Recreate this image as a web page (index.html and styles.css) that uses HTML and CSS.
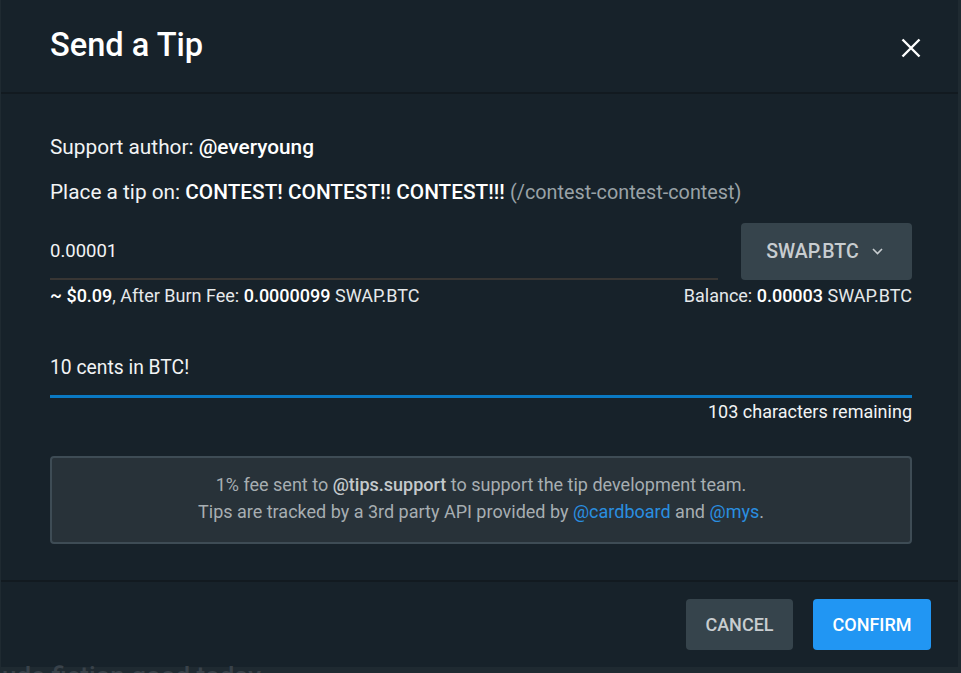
FILE: index.html
```html
<!DOCTYPE html>
<html>
<head>
<meta charset="utf-8">
<link rel="stylesheet" href="styles.css">
</head>
<body>
<div class="page">
  <div class="dialog">
    <div class="header">
      <h1 class="title">Send a Tip</h1>
      <button class="close" aria-label="close">
        <svg width="20" height="20" viewBox="0 0 20 20"><path d="M1.5 1.5 L18.5 18.5 M18.5 1.5 L1.5 18.5" stroke="#ffffff" stroke-width="2.4" fill="none"/></svg>
      </button>
    </div>
    <div class="content">
      <p class="line">Support author: <b>@everyoung</b></p>
      <p class="line line2">Place a tip on: <b>CONTEST! CONTEST!! CONTEST!!!</b> <span class="muted">(/contest-contest-contest)</span></p>
      <div class="amount-row">
        <div class="amount-input">0.00001</div>
        <button class="token">SWAP.BTC
          <svg width="11" height="7" viewBox="0 0 11 7"><path d="M1 1 L5.5 5.5 L10 1" stroke="#c8cdd0" stroke-width="1.6" fill="none"/></svg>
        </button>
      </div>
      <div class="helper-row">
        <span><b>~ $0.09</b>, After Burn Fee: <b>0.0000099</b> SWAP.BTC</span>
        <span>Balance: <b>0.00003</b> SWAP.BTC</span>
      </div>
      <div class="message">10 cents in BTC!</div>
      <div class="remaining">103 characters remaining</div>
      <div class="info">
        <div>1% fee sent to <b>@tips.support</b> to support the tip development team.</div>
        <div>Tips are tracked by a 3rd party API provided by <a>@cardboard</a> and <a>@mys</a>.</div>
      </div>
    </div>
    <div class="footer">
      <button class="btn cancel">CANCEL</button>
      <button class="btn confirm">CONFIRM</button>
    </div>
  </div>
  <div class="behind">ude fiction good today</div>
</div>
</body>
</html>
```

FILE: styles.css
```css
html, body {
  margin: 0;
  padding: 0;
  background: #1f2a31;
  height: 100%;
  overflow: hidden;
}
.page {
  font-family: Roboto, "Liberation Sans", sans-serif;
  color: #f2f4f5;
  height: 673px;
  overflow: hidden;
}
.dialog {
  margin: 0 3px 0 1px;
  height: 667px;
  background: #17222a;
  display: flex;
  flex-direction: column;
}
.header {
  height: 92px;
  border-bottom: 2px solid #121a20;
  display: flex;
  align-items: center;
  justify-content: space-between;
  padding: 0 37px 0 49px;
}
.title {
  margin: 0;
  font-size: 32.6px;
  font-weight: 500;
  color: #ffffff;
  position: relative;
  top: -1px;
}
.close {
  background: none;
  border: 0;
  padding: 0;
  width: 20px;
  height: 20px;
  display: flex;
  position: relative;
  top: 2px;
}
.content {
  padding: 41px 46px 0 49px;
  flex: 1;
  border-bottom: 2px solid #121a20;
}
.line {
  margin: 0;
  font-size: 20.8px;
  line-height: 24px;
  color: #f2f4f5;
  white-space: nowrap;
}
.line b { font-weight: 500; color: #ffffff; }
.line2 { margin-top: 21px; }
.muted { color: #9aa2a7; font-size: 19.8px; }
.amount-row {
  display: flex;
  margin-top: 18px;
  gap: 23px;
  height: 57px;
}
.amount-input {
  flex: 1;
  font-size: 18.5px;
  color: #f2f4f5;
  line-height: 57px;
  border-bottom: 2px solid #383634;
  height: 55px;
}
.token {
  width: 171px;
  height: 57px;
  background: #36444c;
  border: 0;
  border-radius: 4px;
  color: #c8cdd0;
  font-family: Roboto, "Liberation Sans", sans-serif;
  font-size: 19.5px;
  font-weight: 500;
  display: flex;
  align-items: center;
  justify-content: center;
  gap: 13px;
  padding: 0 4px 0 0;
}
.helper-row {
  display: flex;
  justify-content: space-between;
  margin-top: 5px;
  font-size: 18px;
  line-height: 22px;
  color: #e6e9eb;
}
.helper-row b { font-weight: 500; color: #ffffff; }
.message {
  margin-top: 39px;
  font-size: 19.3px;
  line-height: 24px;
  padding: 10px 0 15px;
  border-bottom: 3px solid #0a79c2;
  color: #f2f4f5;
}
.remaining {
  text-align: right;
  font-size: 18px;
  line-height: 22px;
  margin-top: 3px;
  color: #f2f4f5;
}
.info {
  margin-top: 33px;
  background: #283239;
  border: 2px solid #3e4c55;
  border-radius: 4px;
  padding: 13px 0 17px;
  text-align: center;
  font-size: 18px;
  line-height: 27px;
  color: #a7aeb2;
}
.info b { font-weight: 500; color: #c4c9cc; }
.info a { color: #2a8fe0; }
.footer {
  height: 85px;
  display: flex;
  justify-content: flex-end;
  align-items: flex-start;
  gap: 20px;
  padding: 17px 27px 0 0;
  box-sizing: border-box;
}
.btn {
  height: 51px;
  border: 0;
  border-radius: 4px;
  font-family: Roboto, "Liberation Sans", sans-serif;
  font-size: 18px;
  font-weight: 500;
  padding: 0;
}
.cancel {
  width: 107px;
  background: #36444c;
  color: #c8cdd0;
}
.confirm {
  width: 118px;
  background: #2196f3;
  color: #ffffff;
}
.behind {
  font-family: Roboto, "Liberation Sans", sans-serif;
  font-size: 26px;
  line-height: 30px;
  color: #39424a;
  margin-top: -6px;
  padding-left: 2px;
  font-weight: 500;
}
```
